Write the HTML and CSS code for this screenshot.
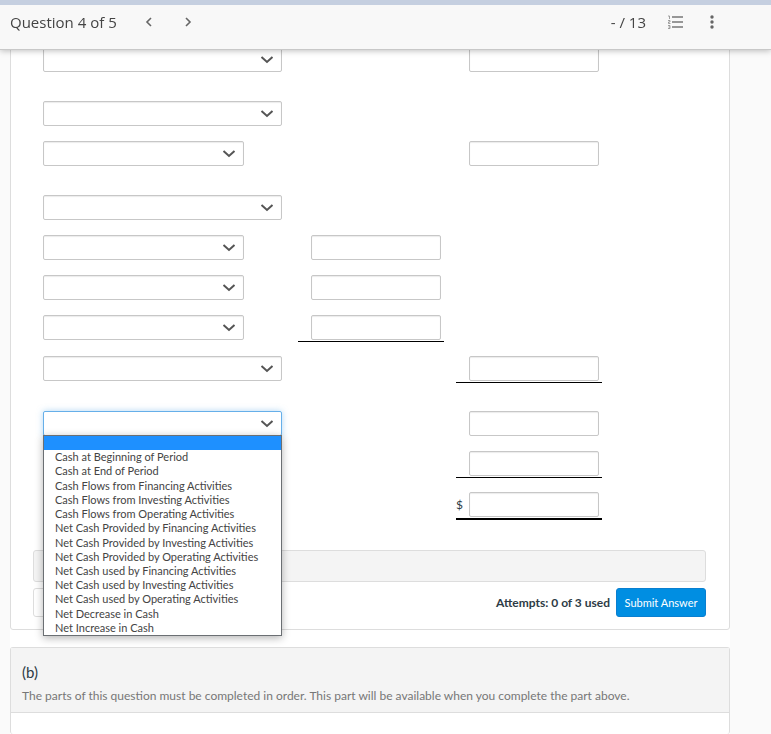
FILE: index.html
```html
<!DOCTYPE html>
<html lang="en">
  <head>
    <meta charset="utf-8" />
    <title>Question 4 of 5</title>
    <link rel="stylesheet" href="styles.css">
  </head>
  <body>
    <header class="topbar">
      <h1>Question 4 of 5</h1>
      <nav class="pager">
        <button class="icon-button" aria-label="Previous question">
          <svg width="8" height="10" viewBox="0 0 8 10"><path d="M6 1L2 5l4 4" fill="none" stroke="#666" stroke-width="1.6" /></svg>
        </button>
        <button class="icon-button" aria-label="Next question">
          <svg width="8" height="10" viewBox="0 0 8 10"><path d="M2 1l4 4-4 4" fill="none" stroke="#666" stroke-width="1.6" /></svg>
        </button>
      </nav>
      <span class="score">- / 13</span>
      <button class="icon-button" aria-label="Question list">
        <svg width="16" height="14" viewBox="0 0 16 14">
          <path d="M4 2h11M4 7h11M4 12h11" stroke="#777" stroke-width="1.6" />
          <path d="M0 1h1.5v3M0 5.5h2V7H.5v1.5h2M0 10.5h2v3H0M.5 12H2" fill="none" stroke="#888" stroke-width=".8" />
        </svg>
      </button>
      <button class="icon-button" aria-label="More options">
        <svg width="4" height="14" viewBox="0 0 4 14" fill="#666"><circle cx="2" cy="2" r="1.7" /><circle cx="2" cy="7" r="1.7" /><circle cx="2" cy="12" r="1.7" /></svg>
      </button>
    </header>
    <main>
      <section class="card part-a">
        <div class="statement-wrap">
          <table class="statement">
            <colgroup>
              <col class="account-col">
              <col class="amount-col">
              <col class="amount-col">
            </colgroup>
            <tr>
              <td><select class="wide" aria-label="Total"><option></option></select></td>
              <td></td>
              <td><div class="amount"><input type="text" aria-label="Total amount" /></div></td>
            </tr>
            <tr class="section">
              <td><select class="wide" aria-label="Section heading"><option></option></select></td>
              <td></td>
              <td></td>
            </tr>
            <tr>
              <td><select aria-label="Account"><option></option></select></td>
              <td></td>
              <td><div class="amount"><input type="text" aria-label="Amount" /></div></td>
            </tr>
            <tr class="section">
              <td><select class="wide" aria-label="Section heading"><option></option></select></td>
              <td></td>
              <td></td>
            </tr>
            <tr>
              <td><select aria-label="Account"><option></option></select></td>
              <td><div class="amount"><input type="text" aria-label="Amount" /></div></td>
              <td></td>
            </tr>
            <tr>
              <td><select aria-label="Account"><option></option></select></td>
              <td><div class="amount"><input type="text" aria-label="Amount" /></div></td>
              <td></td>
            </tr>
            <tr>
              <td><select aria-label="Account"><option></option></select></td>
              <td class="rule"><div class="amount"><input type="text" aria-label="Amount" /></div></td>
              <td></td>
            </tr>
            <tr>
              <td><select class="wide" aria-label="Total"><option></option></select></td>
              <td></td>
              <td class="rule"><div class="amount"><input type="text" aria-label="Total amount" /></div></td>
            </tr>
            <tr class="section">
              <td>
                <div class="dropdown">
                  <select class="wide open" aria-label="Net change"><option></option></select>
                  <ul class="menu" role="listbox">
                    <li class="selected" role="option" aria-selected="true"></li>
                    <li role="option">Cash at Beginning of Period</li>
                    <li role="option">Cash at End of Period</li>
                    <li role="option">Cash Flows from Financing Activities</li>
                    <li role="option">Cash Flows from Investing Activities</li>
                    <li role="option">Cash Flows from Operating Activities</li>
                    <li role="option">Net Cash Provided by Financing Activities</li>
                    <li role="option">Net Cash Provided by Investing Activities</li>
                    <li role="option">Net Cash Provided by Operating Activities</li>
                    <li role="option">Net Cash used by Financing Activities</li>
                    <li role="option">Net Cash used by Investing Activities</li>
                    <li role="option">Net Cash used by Operating Activities</li>
                    <li role="option">Net Decrease in Cash</li>
                    <li role="option">Net Increase in Cash</li>
                  </ul>
                </div>
              </td>
              <td></td>
              <td><div class="amount"><input type="text" aria-label="Net change amount" /></div></td>
            </tr>
            <tr>
              <td><select class="wide" aria-label="Opening cash"><option></option></select></td>
              <td></td>
              <td class="rule"><div class="amount"><input type="text" aria-label="Opening cash amount" /></div></td>
            </tr>
            <tr>
              <td><select class="wide" aria-label="Closing cash"><option></option></select></td>
              <td></td>
              <td class="rule double"><div class="amount"><label for="closing">$</label><input type="text" id="closing" /></div></td>
            </tr>
          </table>
        </div>
        <div class="support"></div>
        <div class="actions">
          <button class="save" aria-label="Save"></button>
          <span class="attempts">Attempts: 0 of 3 used</span>
          <button class="submit">Submit Answer</button>
        </div>
      </section>
      <section class="card part-b">
        <div class="part-head">
          <h2>(b)</h2>
          <p>The parts of this question must be completed in order. This part will be available when you complete the part above.</p>
        </div>
      </section>
    </main>
  </body>
</html>
```

FILE: styles.css
```css
* {
  box-sizing: border-box;
}
body {
  margin: 0;
  height: 100vh;
  overflow: hidden;
  background-color: #fafafa;
  font-family: Lato, sans-serif;
  font-size: 12px;
  color: #2d3b45;
}
h1,
h2,
p,
ul {
  margin: 0;
}
.topbar {
  position: fixed;
  top: 0;
  left: 0;
  right: 0;
  z-index: 10;
  height: 50px;
  display: flex;
  align-items: center;
  padding: 0 41px 10px 10px;
  border-top: 5px solid #c5cfe0;
  border-bottom: 1px solid #c8c8c8;
  background-color: #f8f8f8;
  box-shadow: 0 1px 6px rgba(0, 0, 0, 0.25);
  font-family: "Open Sans", sans-serif;
  color: #444;
}
.topbar h1 {
  font-size: 15px;
  font-weight: 400;
}
.pager {
  display: flex;
  margin: 0 auto 0 13px;
}
.pager .icon-button {
  width: 39px;
}
.score {
  font-size: 15px;
  margin-right: 12px;
}
.icon-button {
  width: 36px;
  height: 24px;
  padding: 0;
  border: 0;
  background: none;
  display: flex;
  align-items: center;
  justify-content: center;
  cursor: pointer;
}
main {
  height: 100%;
  margin: 0 41px 0 10px;
  background-color: #fff;
  display: flex;
  flex-direction: column;
  gap: 17px;
}
.card {
  border: 1px solid #ddd;
  border-radius: 3px;
}
.part-a {
  flex-shrink: 0;
  padding: 32px 0 12px;
}
.statement-wrap {
  padding: 0 20px;
}
.statement {
  table-layout: fixed;
  width: 583px;
  border-collapse: separate;
  border-spacing: 12px 0;
}
.account-col {
  width: 243px;
}
.amount-col {
  width: 146px;
}
.statement td {
  padding: 14px 0 1px;
  vertical-align: top;
}
.statement .section td {
  padding-top: 28px;
}
.statement td.rule {
  border-bottom: 1px solid #000;
}
.statement td.double {
  border-bottom-width: 2px;
}
select,
input {
  display: block;
  height: 25px;
  margin: 0;
  padding: 0 8px;
  border: 1px solid #c7c7c7;
  border-radius: 2px;
  background-color: #fff;
  box-shadow: inset 0 1px 1px rgba(0, 0, 0, 0.08);
  font-family: inherit;
  font-size: 12px;
}
input {
  width: 130px;
}
select {
  appearance: none;
  width: 201px;
  background-image: url("data:image/svg+xml,%3Csvg xmlns='http://www.w3.org/2000/svg' width='14' height='8'%3E%3Cpath d='M1.5 1L7 6l5.5-5' fill='none' stroke='%23555' stroke-width='2'/%3E%3C/svg%3E");
  background-repeat: no-repeat;
  background-position: right 7px center;
}
select.wide {
  width: 239px;
}
select.open {
  border-color: #66afe9;
  box-shadow: 0 0 6px rgba(102, 175, 233, 0.5);
}
.amount {
  display: flex;
  justify-content: flex-end;
  align-items: center;
  gap: 6px;
  padding-right: 3px;
}
.dropdown {
  position: relative;
}
.menu {
  position: absolute;
  top: 24px;
  left: 0;
  z-index: 5;
  width: 239px;
  height: 201px;
  padding: 0;
  list-style: none;
  display: grid;
  grid-template-rows: repeat(14, 1fr);
  border: 1px solid #6b6f73;
  background-color: #fff;
  box-shadow: 0 2px 8px rgba(0, 0, 0, 0.3);
  font-size: 11px;
  line-height: 14px;
  color: #444;
}
.menu li {
  padding-left: 11px;
  white-space: nowrap;
}
.menu .selected {
  background-color: #1e90ff;
}
.support {
  height: 32px;
  margin: 30px 23px 6px 22px;
  border: 1px solid #ddd;
  border-radius: 3px;
  background-color: #f4f4f4;
}
.actions {
  display: flex;
  align-items: center;
  gap: 6px;
  padding: 0 23px 0 22px;
}
.save {
  width: 100px;
  height: 29px;
  margin-right: auto;
  border: 1px solid #ddd;
  border-radius: 3px;
  background-color: #fff;
}
.attempts {
  font-weight: 700;
}
.submit {
  width: 90px;
  height: 29px;
  padding: 0;
  border: 1px solid #0a7fd0;
  border-radius: 3px;
  background-color: #008ee2;
  color: #fff;
  font-family: inherit;
  font-size: 11px;
}
.part-b {
  flex: 1;
  border-bottom: 0;
}
.part-head {
  padding: 14px 11px 6px;
  border-bottom: 1px solid #ddd;
  background-color: #f4f4f4;
}
.part-head h2 {
  font-size: 15px;
  font-weight: 400;
  line-height: 20px;
}
.part-head p {
  margin-top: 4px;
  line-height: 20px;
  color: #777;
}
```
